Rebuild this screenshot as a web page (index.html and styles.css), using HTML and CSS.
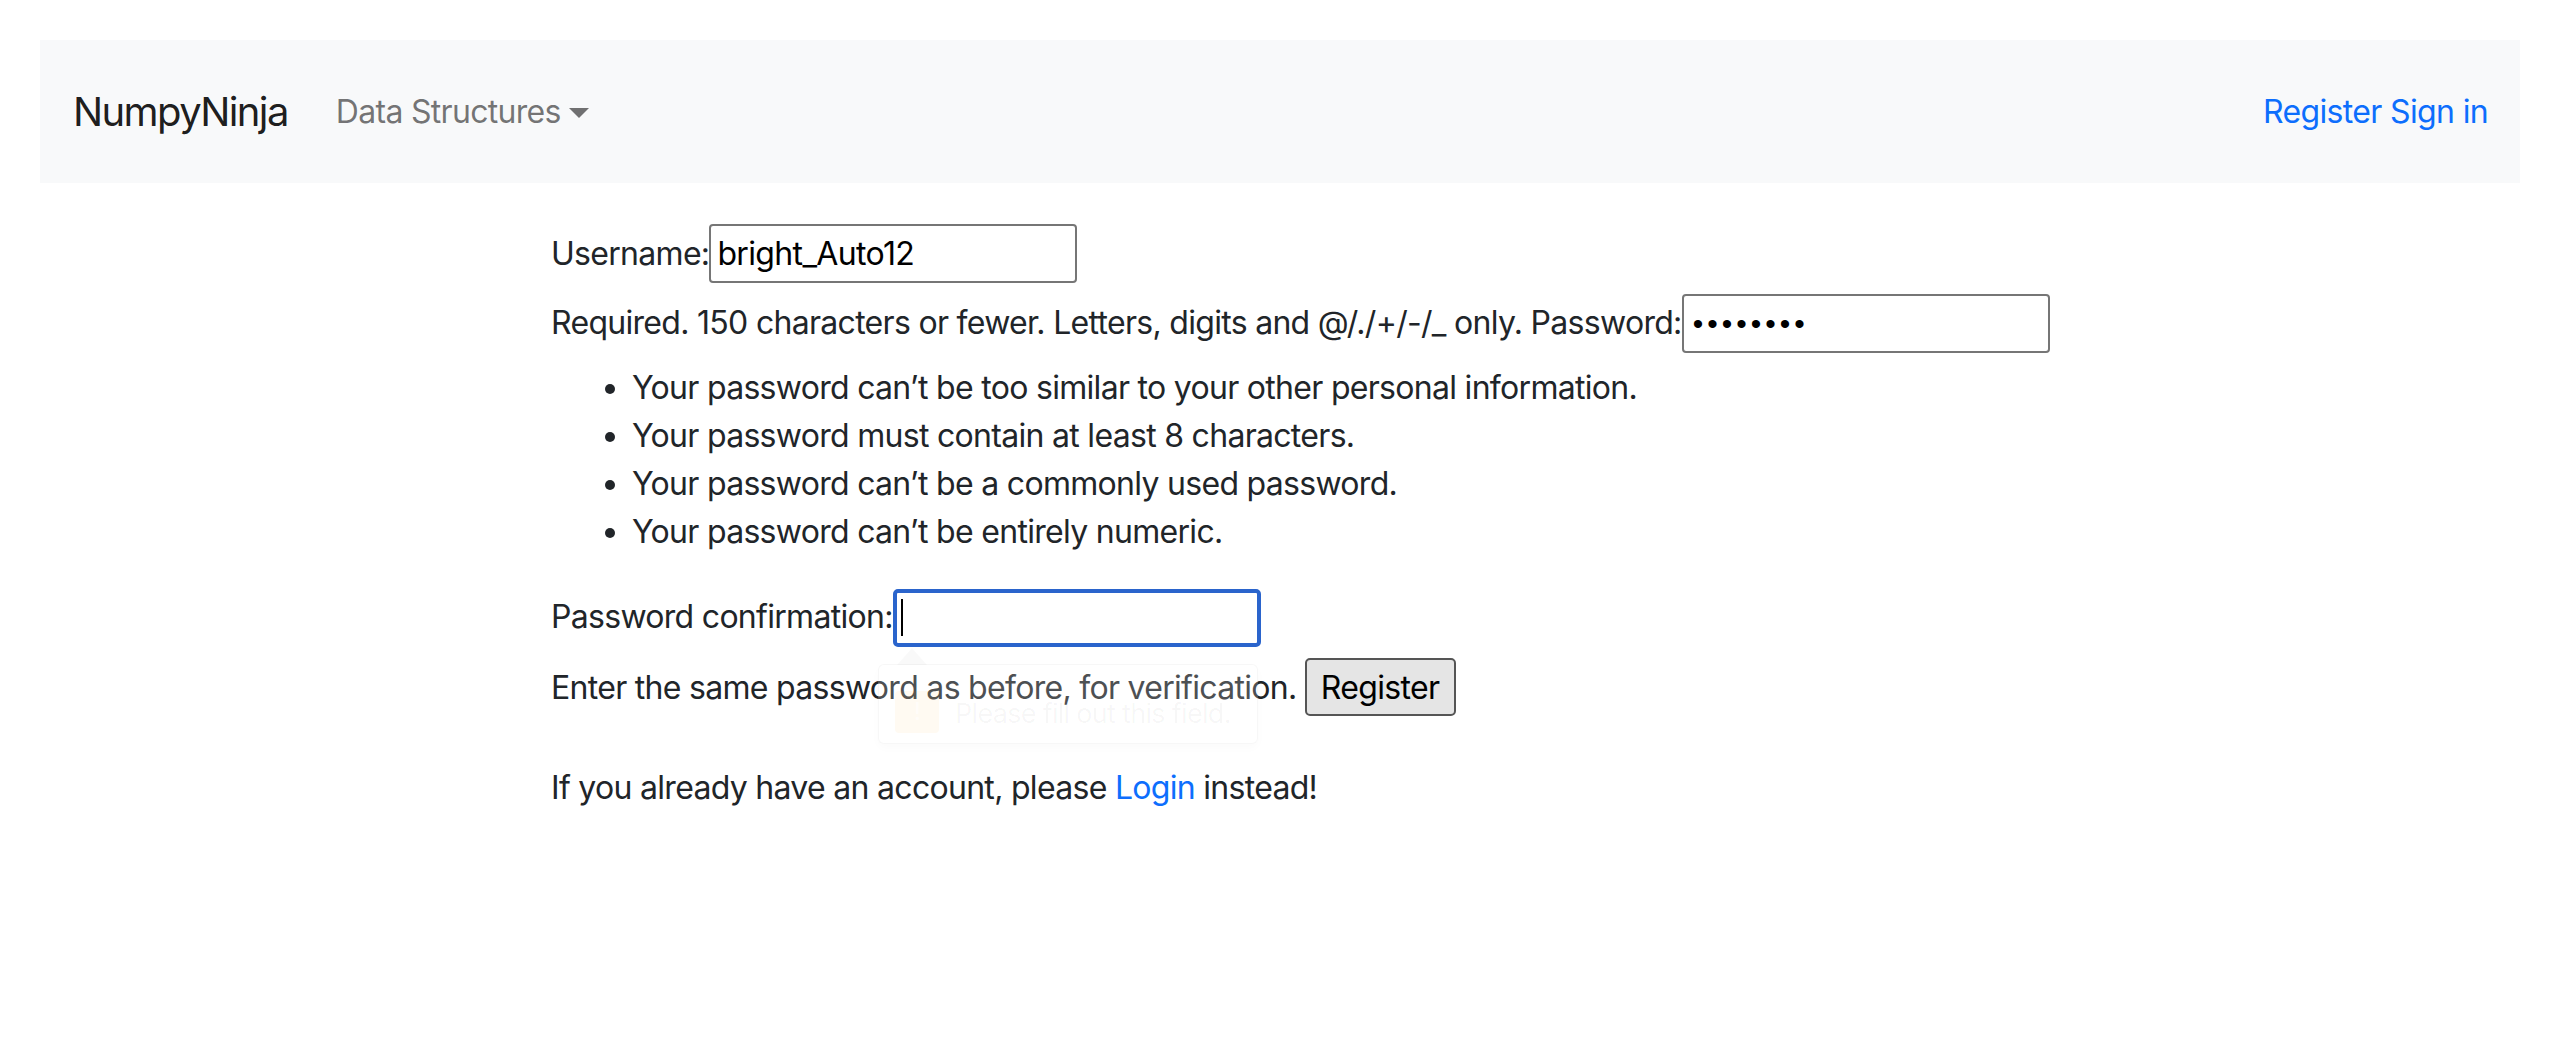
FILE: index.html
```html
<!DOCTYPE html>
<html lang="en">
<head>
<meta charset="utf-8">
<title>Register - NumpyNinja</title>
<link rel="stylesheet" href="styles.css">
</head>
<body>
<div class="page">
  <nav class="navbar">
    <a class="brand" href="#">NumpyNinja</a>
    <a class="nav-dropdown" href="#">Data Structures<span class="dd-caret"></span></a>
    <div class="nav-right"><a class="nav-link" href="#">Register</a> <a class="nav-link" href="#">Sign in</a></div>
  </nav>
  <main class="content">
    <form class="reg-form">
      <div class="line"><label>Username:</label><input class="field" type="text" value="bright_Auto12"></div>
      <div class="line"><span class="helptext">Required. 150 characters or fewer. Letters, digits and @/./+/-/_ only. </span><label>Password:</label><input class="field pw" type="password" value="abcdefgh"></div>
      <ul class="rules">
        <li>Your password can’t be too similar to your other personal information.</li>
        <li>Your password must contain at least 8 characters.</li>
        <li>Your password can’t be a commonly used password.</li>
        <li>Your password can’t be entirely numeric.</li>
      </ul>
      <div class="line"><label>Password confirmation:</label><span class="focus-wrap"><input class="field pw focused" type="password" value=""></span></div>
      <div class="line tip-anchor">Enter the same password as before, for verification. <button class="submit" type="button">Register</button>
        <div class="tooltip"><span class="tip-icon">!</span><span class="tip-text">Please fill out this field.</span></div>
      </div>
    </form>
    <p class="login-note">If you already have an account, please <a href="#">Login</a> instead!</p>
  </main>
</div>
</body>
</html>
```

FILE: styles.css
```css
* { box-sizing: border-box; }

html, body {
  margin: 0;
  padding: 0;
  background: #ffffff;
}

body {
  font-family: Inter, "Noto Sans", "Liberation Sans", sans-serif;
  font-size: 32px;
  line-height: 48px;
  letter-spacing: -0.7px;
  color: #212529;
}

a { text-decoration: none; }

.page {
  padding: 40px 40px 0 40px;
}

/* ---------- navbar ---------- */
.navbar {
  display: flex;
  align-items: center;
  height: 143px;
  padding: 0 32px 0 33px;
  background: #f8f9fa;
}

.brand {
  font-size: 40px;
  line-height: 60px;
  letter-spacing: -1.6px;
  color: rgba(0, 0, 0, 0.9);
  margin-right: 32px;
}

.nav-dropdown {
  color: rgba(0, 0, 0, 0.55);
  padding-left: 16px;
  display: inline-flex;
  align-items: center;
}

.dd-caret {
  display: inline-block;
  width: 0;
  height: 0;
  margin-left: 8px;
  margin-top: 2px;
  border-top: 10px solid rgba(0, 0, 0, 0.55);
  border-left: 10px solid transparent;
  border-right: 10px solid transparent;
}

.nav-right {
  margin-left: auto;
  letter-spacing: -0.65px;
}

.nav-link {
  color: #0d6efd;
}

/* ---------- content ---------- */
.content {
  padding-left: 511px;
}

.reg-form {
  margin-top: 41px;
  position: relative;
}

.line {
  margin-bottom: 11px;
  white-space: nowrap;
}

.field {
  display: inline-block;
  width: 368px;
  height: 59px;
  margin: 0;
  padding: 0 6px;
  border: 2px solid #767676;
  border-radius: 4px;
  font-family: inherit;
  font-size: 32px;
  letter-spacing: -0.65px;
  color: #000000;
  background: #ffffff;
  vertical-align: baseline;
  outline: none;
}

.field.pw {
  font-family: "Liberation Sans", sans-serif;
  font-size: 30px;
  letter-spacing: 4px;
  padding-left: 9px;
}

.field.focused {
  border: 4px solid #2a64cc;
  border-radius: 5px;
  height: 58px;
}

.focus-wrap {
  position: relative;
  display: inline-block;
}

.focus-wrap::after {
  content: "";
  position: absolute;
  left: 8px;
  top: 10px;
  width: 2px;
  height: 37px;
  background: #000000;
}

.rules {
  margin: 0 0 33px 0;
  padding-left: 81px;
}

.rules li {
  line-height: 48px;
}

.submit {
  display: inline-block;
  height: 58px;
  margin: 0;
  padding: 0 14px;
  border: 2px solid #555555;
  border-radius: 5px;
  background: #e5e5e5;
  font-family: inherit;
  font-size: 32px;
  letter-spacing: -0.65px;
  color: #000000;
  vertical-align: baseline;
}

.tip-anchor {
  position: relative;
}

.tooltip {
  position: absolute;
  left: 327px;
  top: 6px;
  width: 380px;
  height: 80px;
  border: 1px solid rgba(0, 0, 0, 0.03);
  border-radius: 6px;
  background: rgba(255, 255, 255, 0.2);
  box-shadow: 0 4px 10px rgba(0, 0, 0, 0.02);
  display: flex;
  align-items: center;
  gap: 16px;
  padding-left: 16px;
  pointer-events: none;
}

.tooltip::before {
  content: "";
  position: absolute;
  left: 18px;
  top: -17px;
  width: 0;
  height: 0;
  border-bottom: 17px solid rgba(0, 0, 0, 0.025);
  border-left: 15px solid transparent;
  border-right: 15px solid transparent;
}

.tip-icon {
  display: inline-block;
  width: 44px;
  height: 42px;
  margin-top: 16px;
  border-radius: 4px;
  background: rgba(255, 165, 40, 0.06);
  color: rgba(255, 255, 255, 0.6);
  font-size: 24px;
  line-height: 42px;
  text-align: center;
}

.tip-text {
  font-size: 27px;
  margin-top: 20px;
  color: rgba(0, 0, 0, 0.04);
}

.login-note {
  margin: 48px 0 0 0;
}

.login-note a {
  color: #0d6efd;
}
```
